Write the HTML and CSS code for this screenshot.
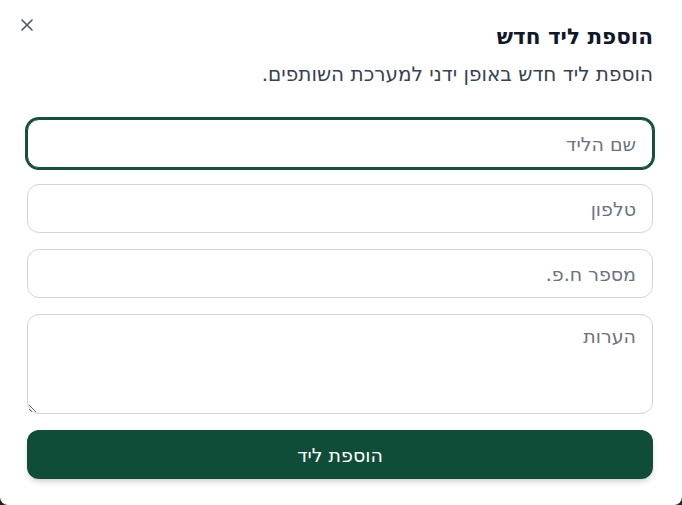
FILE: index.html
```html
<!DOCTYPE html>
<html lang="he" dir="rtl">
<head>
<meta charset="utf-8">
<link rel="stylesheet" href="styles.css">
</head>
<body>
<div class="dialog">
  <button class="close" aria-label="סגור">
    <svg width="14" height="14" viewBox="0 0 14 14"><path d="M2 2 L12 12 M12 2 L2 12" stroke="#4b5563" stroke-width="1.6" stroke-linecap="round" fill="none"/></svg>
  </button>
  <header class="head">
    <h2 class="title">הוספת ליד חדש</h2>
    <p class="desc">הוספת ליד חדש באופן ידני למערכת השותפים.</p>
  </header>
  <form class="form">
    <input class="field focused" type="text" placeholder="שם הליד">
    <input class="field" type="text" placeholder="טלפון">
    <input class="field" type="text" placeholder="מספר ח.פ.">
    <textarea class="field area" placeholder="הערות"></textarea>
    <button class="submit" type="button">הוספת ליד</button>
  </form>
</div>
</body>
</html>
```
FILE: styles.css
```css
html, body {
  margin: 0;
  padding: 0;
  height: 100%;
  background: #222;
}
body {
  font-family: "DejaVu Sans", "Open Sans", sans-serif;
  color: #0f172a;
}
.dialog {
  position: relative;
  box-sizing: border-box;
  width: 682px;
  height: 505px;
  background: #fff;
  border-radius: 0 0 8px 8px;
  padding: 22px 29px 0 27px;
}
.close {
  position: absolute;
  left: 20px;
  top: 18px;
  width: 14px;
  height: 14px;
  padding: 0;
  border: 0;
  background: none;
  display: flex;
}
.head {
  display: flex;
  flex-direction: column;
  gap: 8px;
}
.title {
  margin: 0;
  font-size: 21.5px;
  font-weight: 700;
  line-height: 30px;
  color: #111827;
}
.desc {
  margin: 0;
  font-size: 20px;
  line-height: 28px;
  color: #374151;
}
.form {
  margin-top: 31px;
  display: flex;
  flex-direction: column;
  gap: 16px;
}
.field {
  box-sizing: border-box;
  height: 49px;
  width: 100%;
  border: 1px solid #d4d4d8;
  border-radius: 12px;
  padding: 0 16px;
  font-family: inherit;
  font-size: 19px;
  color: #111827;
  background: #fff;
  outline: none;
}
.field::placeholder {
  color: #6b7280;
}
.focused {
  border-color: #1e4d3a;
  box-shadow: 0 0 0 2px #14503a;
}
.area {
  height: 100px;
  padding-top: 10px;
  resize: vertical;
}
.submit {
  height: 49px;
  border: 0;
  border-radius: 12px;
  background: #0f4d38;
  color: #fff;
  font-family: inherit;
  font-size: 19px;
  font-weight: 500;
  box-shadow: 0 4px 6px -1px rgba(0,0,0,0.15), 0 2px 4px -2px rgba(0,0,0,0.1);
}
```
